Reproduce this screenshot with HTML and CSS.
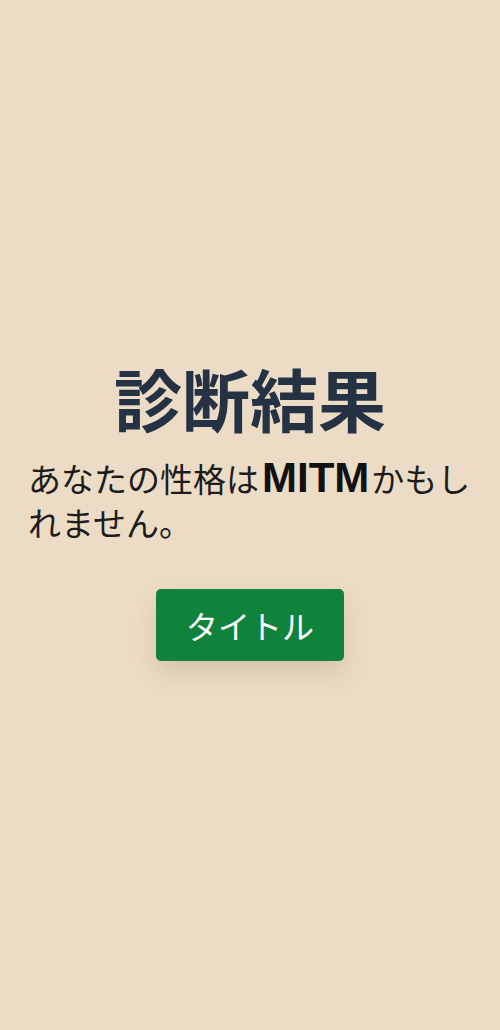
FILE: index.html
```html
<!DOCTYPE html>
<html lang="ja">
<head>
  <meta charset="utf-8">
  <title>診断結果</title>
  <link rel="stylesheet" href="styles.css">
</head>
<body>
  <main class="result">
    <h1 class="result-title">診断結果</h1>
    <p class="result-text">あなたの性格は<strong>MITM</strong>かもし<br>れません。</p>
    <a href="#" class="button">タイトル</a>
  </main>
</body>
</html>
```

FILE: styles.css
```css
body {
  margin: 0;
  padding: 0;
  background-color: #ecdcc6;
  font-family: "Noto Sans CJK JP", "Noto Sans", sans-serif;
  color: #1c1c1c;
}

.result {
  min-height: 1030px;
  box-sizing: border-box;
  padding: 0 28px 12px;
  display: flex;
  flex-direction: column;
  justify-content: center;
  align-items: center;
}

.result-title {
  margin: 0 0 17px;
  font-size: 68px;
  line-height: 1.2;
  font-weight: 700;
  color: #253244;
  text-align: center;
}

.result-text {
  margin: 0 0 45px;
  width: 100%;
  font-size: 33px;
  line-height: 44px;
}

.result-text strong {
  margin: 0 2px 0 3px;
  font-family: "Liberation Sans", Arial, sans-serif;
  font-size: 42px;
  line-height: 1;
  font-weight: 700;
  color: #111;
}

.button {
  display: inline-block;
  padding: 12px 30px;
  background-color: #0f823b;
  color: #fff;
  font-size: 32px;
  line-height: 48px;
  text-decoration: none;
  border-radius: 5px;
  box-shadow: 0 12px 24px rgba(120, 90, 50, 0.18);
}
```
